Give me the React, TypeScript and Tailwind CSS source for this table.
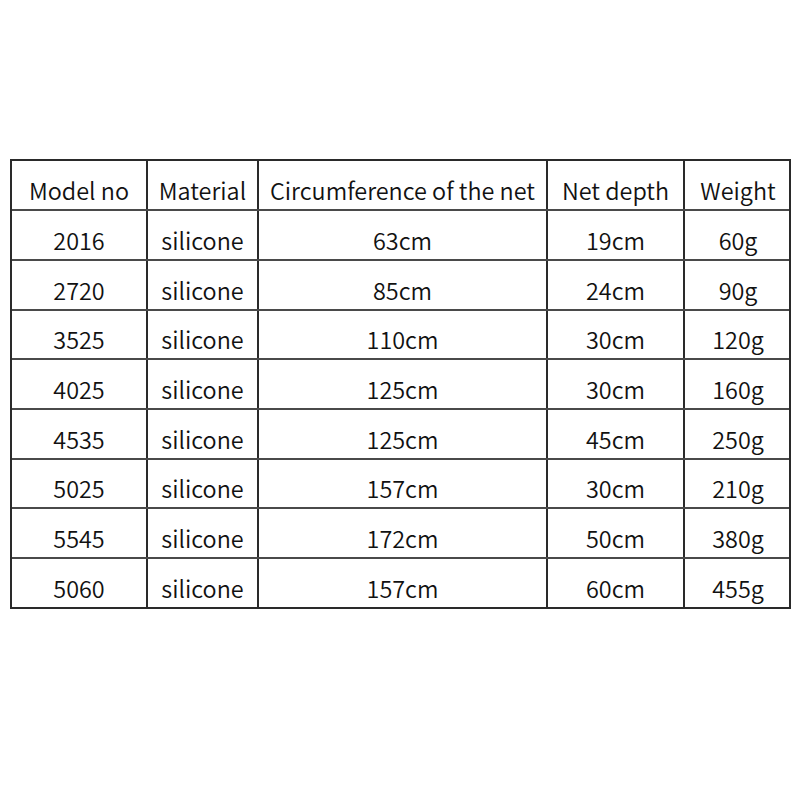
import React from "react";

const header = ["Model no", "Material", "Circumference of the net", "Net depth", "Weight"];
const rows = [
  ["2016", "silicone", "63cm", "19cm", "60g"],
  ["2720", "silicone", "85cm", "24cm", "90g"],
  ["3525", "silicone", "110cm", "30cm", "120g"],
  ["4025", "silicone", "125cm", "30cm", "160g"],
  ["4535", "silicone", "125cm", "45cm", "250g"],
  ["5025", "silicone", "157cm", "30cm", "210g"],
  ["5545", "silicone", "172cm", "50cm", "380g"],
  ["5060", "silicone", "157cm", "60cm", "455g"],
];
const heights = [50, 50, 50, 49, 50, 50, 49, 50, 48];

function Row({ cells, h, last }: { cells: string[]; h: number; last: boolean }) {
  return (
    <div
      className={`grid grid-cols-[136px_111px_289px_137px_106px] ${last ? "" : "border-b-2 border-[#4a4a4a]"}`}
      style={{ height: h }}
    >
      {cells.map((c, i) => (
        <div
          key={i}
          className={`flex items-end justify-center pb-[7px] text-[23.4px] leading-[23px] font-[350] text-[#111] ${i < 4 ? "border-r-2 border-[#2a2a2a]" : ""}`}
        >
          {c}
        </div>
      ))}
    </div>
  );
}

export default function App() {
  return (
    <div
      className="w-[800px] h-[800px] bg-white pt-[159px] pl-[10px]"
      style={{ fontFamily: '"Noto Sans CJK SC", "Noto Sans", sans-serif' }}
    >
      <div className="w-[781px] border-2 border-[#2a2a2a] flex flex-col">
        {[header, ...rows].map((r, idx) => (
          <Row key={idx} cells={r} h={heights[idx]} last={idx === rows.length} />
        ))}
      </div>
    </div>
  );
}
